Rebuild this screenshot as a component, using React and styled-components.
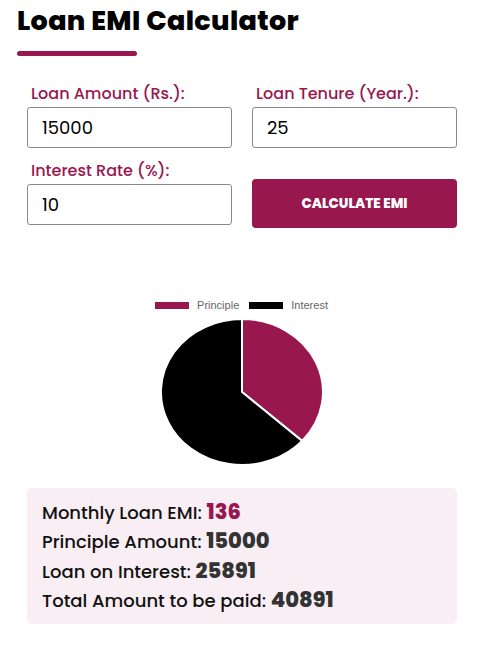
import React from "react";
import styled, { createGlobalStyle } from "styled-components";

const GlobalStyle = createGlobalStyle`
  body {
    margin: 0;
    background: #fff;
    font-family: "Poppins", "Inter", "Noto Sans", sans-serif;
  }
`;

const Page = styled.div`
  width: 483px;
  padding: 0 17px;
  box-sizing: border-box;
`;

const Title = styled.h1`
  margin: 0;
  padding-top: 4px;
  font-size: 27px;
  font-weight: 800;
  line-height: 34px;
  color: #000;
  letter-spacing: 0.35px;
`;

const Bar = styled.div`
  width: 120px;
  height: 5px;
  border-radius: 3px;
  background: #98174f;
  margin-top: 13px;
`;

const Form = styled.div`
  display: grid;
  grid-template-columns: 205px 205px;
  column-gap: 20px;
  row-gap: 13px;
  margin: 28px 9px 0 10px;
  align-items: end;
`;

const Field = styled.div`
  display: flex;
  flex-direction: column;
`;

const Label = styled.label`
  font-size: 16px;
  font-weight: 500;
  color: #98174f;
  padding-left: 4px;
  line-height: 20px;
  margin-bottom: 3px;
`;

const Input = styled.input`
  height: 41px;
  box-sizing: border-box;
  border: 1px solid #8a8a8a;
  border-radius: 3px;
  padding: 0 14px;
  font-family: inherit;
  font-size: 18px;
  color: #000;
  outline: none;
`;

const CalcButton = styled.button`
  height: 49px;
  margin-bottom: -3px;
  border: none;
  border-radius: 4px;
  background: #98174f;
  color: #fff;
  font-family: inherit;
  font-size: 13.5px;
  font-weight: 800;
  cursor: pointer;
`;

const ChartBox = styled.div`
  display: flex;
  flex-direction: column;
  align-items: center;
  margin-top: 73px;
`;

const Legend = styled.div`
  display: flex;
  align-items: center;
  gap: 10px;
  font-family: "Liberation Sans", Arial, sans-serif;
  font-size: 11px;
  color: #666;
  height: 14px;
`;

const LegendItem = styled.div`
  display: flex;
  align-items: center;
  gap: 8px;
`;

const Swatch = styled.span`
  width: 34px;
  height: 7px;
  background: ${(p) => p.color};
`;

const Pie = styled.svg`
  margin-top: 6px;
  display: block;
`;

const Result = styled.div`
  margin: 21px 9px 0 10px;
  background: #f8eef3;
  border-radius: 5px;
  padding: 10px 15px 9px;
`;

const Line = styled.div`
  font-size: 18px;
  font-weight: 500;
  color: #111;
  line-height: 29.3px;
`;

const Value = styled.span`
  font-size: 21px;
  font-weight: 800;
  line-height: 1;
  color: ${(p) => (p.accent ? "#98174f" : "#333")};
`;

export default function App() {
  return (
    <Page>
      <GlobalStyle />
      <Title>Loan EMI Calculator</Title>
      <Bar />
      <Form>
        <Field>
          <Label>Loan Amount (Rs.):</Label>
          <Input defaultValue="15000" />
        </Field>
        <Field>
          <Label>Loan Tenure (Year.):</Label>
          <Input defaultValue="25" />
        </Field>
        <Field>
          <Label>Interest Rate (%):</Label>
          <Input defaultValue="10" />
        </Field>
        <CalcButton>CALCULATE EMI</CalcButton>
      </Form>
      <ChartBox>
        <Legend>
          <LegendItem>
            <Swatch color="#98174f" />
            Principle
          </LegendItem>
          <LegendItem>
            <Swatch color="#000" />
            Interest
          </LegendItem>
        </Legend>
        <Pie width="166" height="149" viewBox="0 0 166 149">
          <path
            d="M83,74 L83,1 A81,73 0 0 1 143.1,122.9 Z"
            fill="#98174f"
            stroke="#fff"
            strokeWidth="2"
          />
          <path
            d="M83,74 L143.1,122.9 A81,73 0 1 1 83,1 Z"
            fill="#000"
            stroke="#fff"
            strokeWidth="2"
          />
        </Pie>
      </ChartBox>
      <Result>
        <Line>
          Monthly Loan EMI: <Value accent>136</Value>
        </Line>
        <Line>
          Principle Amount: <Value>15000</Value>
        </Line>
        <Line>
          Loan on Interest: <Value>25891</Value>
        </Line>
        <Line>
          Total Amount to be paid: <Value>40891</Value>
        </Line>
      </Result>
    </Page>
  );
}
